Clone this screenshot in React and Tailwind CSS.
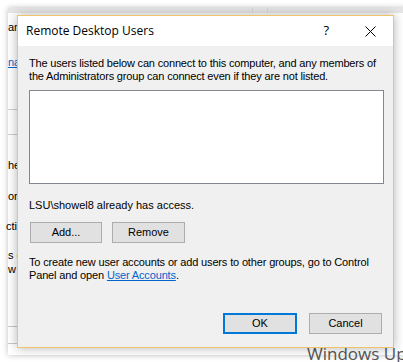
function Peek({ h, children, line }) {
  return (
    <div className={`relative shrink-0 flex items-end ${h}`}>
      {children}
      {line && <div className="absolute left-0 bottom-0 w-[10px] h-px bg-[#d0d0d0]" />}
    </div>
  );
}

export default function App() {
  return (
    <div className="relative w-[403px] h-[362px] overflow-hidden bg-white" style={{ fontFamily: '"Liberation Sans", Arial, sans-serif' }}>
      {/* background window behind the dialog */}
      <div className="absolute left-[8px] top-[8px] w-[400px] h-[347px] bg-white shadow-[0_0_6px_rgba(0,0,0,0.25)] flex flex-col">
        <div className="h-[5px] bg-[#e6e6e6] shrink-0 flex">
          <div className="ml-[244px] w-px bg-[#d8d8d8]" />
          <div className="ml-[14px] w-px bg-[#d8d8d8]" />
        </div>
        <div className="flex flex-col text-[11px] leading-[13px] text-black">
          <div className="mt-[8px]">ar</div>
          <div className="mt-[22px] text-[#0066cc] underline">na</div>
          <div className="mt-[40px] w-[10px] h-px bg-[#d0d0d0]" />
          <div className="mt-[24px] w-[10px] h-px bg-[#d0d0d0]" />
          <div className="mt-[24px]">he</div>
          <div className="mt-[18px]">or</div>
          <div className="mt-[17px] -ml-[2px]">cti</div>
          <div className="mt-[16px]">s c</div>
          <div className="mt-[1px]">w</div>
          <div className="mt-[50px] w-[10px] h-px bg-[#c8c8c8]" />
          <div className="mt-[16px] w-[10px] h-px bg-[#c8c8c8]" />
        </div>
        <div className="mt-auto -mb-[6px] ml-[299px] whitespace-nowrap text-[17px] leading-[20px] text-[#555]" style={{ fontFamily: '"Open Sans", "Noto Sans", sans-serif' }}>Windows Upd</div>
        <div className="absolute left-[385px] top-[118px] w-px h-px bg-[#333]" />
        <div className="absolute left-[385px] top-[125px] w-px h-px bg-[#333]" />
        <div className="absolute left-[385px] top-[158px] w-px h-px bg-[#333]" />
        <div className="absolute left-[385px] top-[165px] w-px h-px bg-[#333]" />
      </div>

      {/* dialog */}
      <div className="absolute left-[17px] top-[15px] w-[377px] h-[333px] border border-[#efc36a] bg-[#f0f0f0] flex flex-col shadow-[0_0_10px_rgba(0,0,0,0.3)]">
        <div className="h-[30px] bg-white flex items-center pl-[8px] pr-[15px] shrink-0">
          <span className="text-[12px] text-black" style={{ fontFamily: '"Open Sans", "Noto Sans", sans-serif' }}>Remote Desktop Users</span>
          <span className="ml-auto text-[13px] text-black mr-[36px]" style={{ fontFamily: '"Open Sans", "Noto Sans", sans-serif' }}>?</span>
          <svg width="11" height="11" viewBox="0 0 11 11" className="mr-[2px]">
            <path d="M0.5 0.5 L10.5 10.5 M10.5 0.5 L0.5 10.5" stroke="#000" strokeWidth="1" fill="none" />
          </svg>
        </div>
        <div className="flex flex-col pl-[11px] pr-[10px] pt-[11px] text-[11px] leading-[13px] text-black">
          <p className="tracking-[-0.17px]">The users listed below can connect to this computer, and any members of the Administrators group can connect even if they are not listed.</p>
          <div className="mt-[7px] h-[94px] w-[355px] bg-white border border-[#828790]" />
          <p className="mt-[15px]">LSU\showel8 already has access.</p>
          <div className="mt-[10px] flex gap-[10px] ml-[1px]">
            <button className="w-[72px] h-[21px] bg-[#e1e1e1] border border-[#adadad] text-[11px] text-black">Add...</button>
            <button className="w-[73px] h-[21px] bg-[#e1e1e1] border border-[#adadad] text-[11px] text-black">Remove</button>
          </div>
          <p className="mt-[13px] tracking-[-0.15px]">To create new user accounts or add users to other groups, go to Control Panel and open <span className="text-[#0066cc] underline">User Accounts</span>.</p>
        </div>
        <div className="mt-auto mb-[13px] flex justify-end gap-[12px] pr-[11px]">
          <button className="w-[74px] h-[21px] bg-[#e1e1e1] border-2 border-[#0078d7] text-[11px] text-black">OK</button>
          <button className="w-[73px] h-[21px] bg-[#e1e1e1] border border-[#adadad] text-[11px] text-black">Cancel</button>
        </div>
      </div>
    </div>
  );
}
